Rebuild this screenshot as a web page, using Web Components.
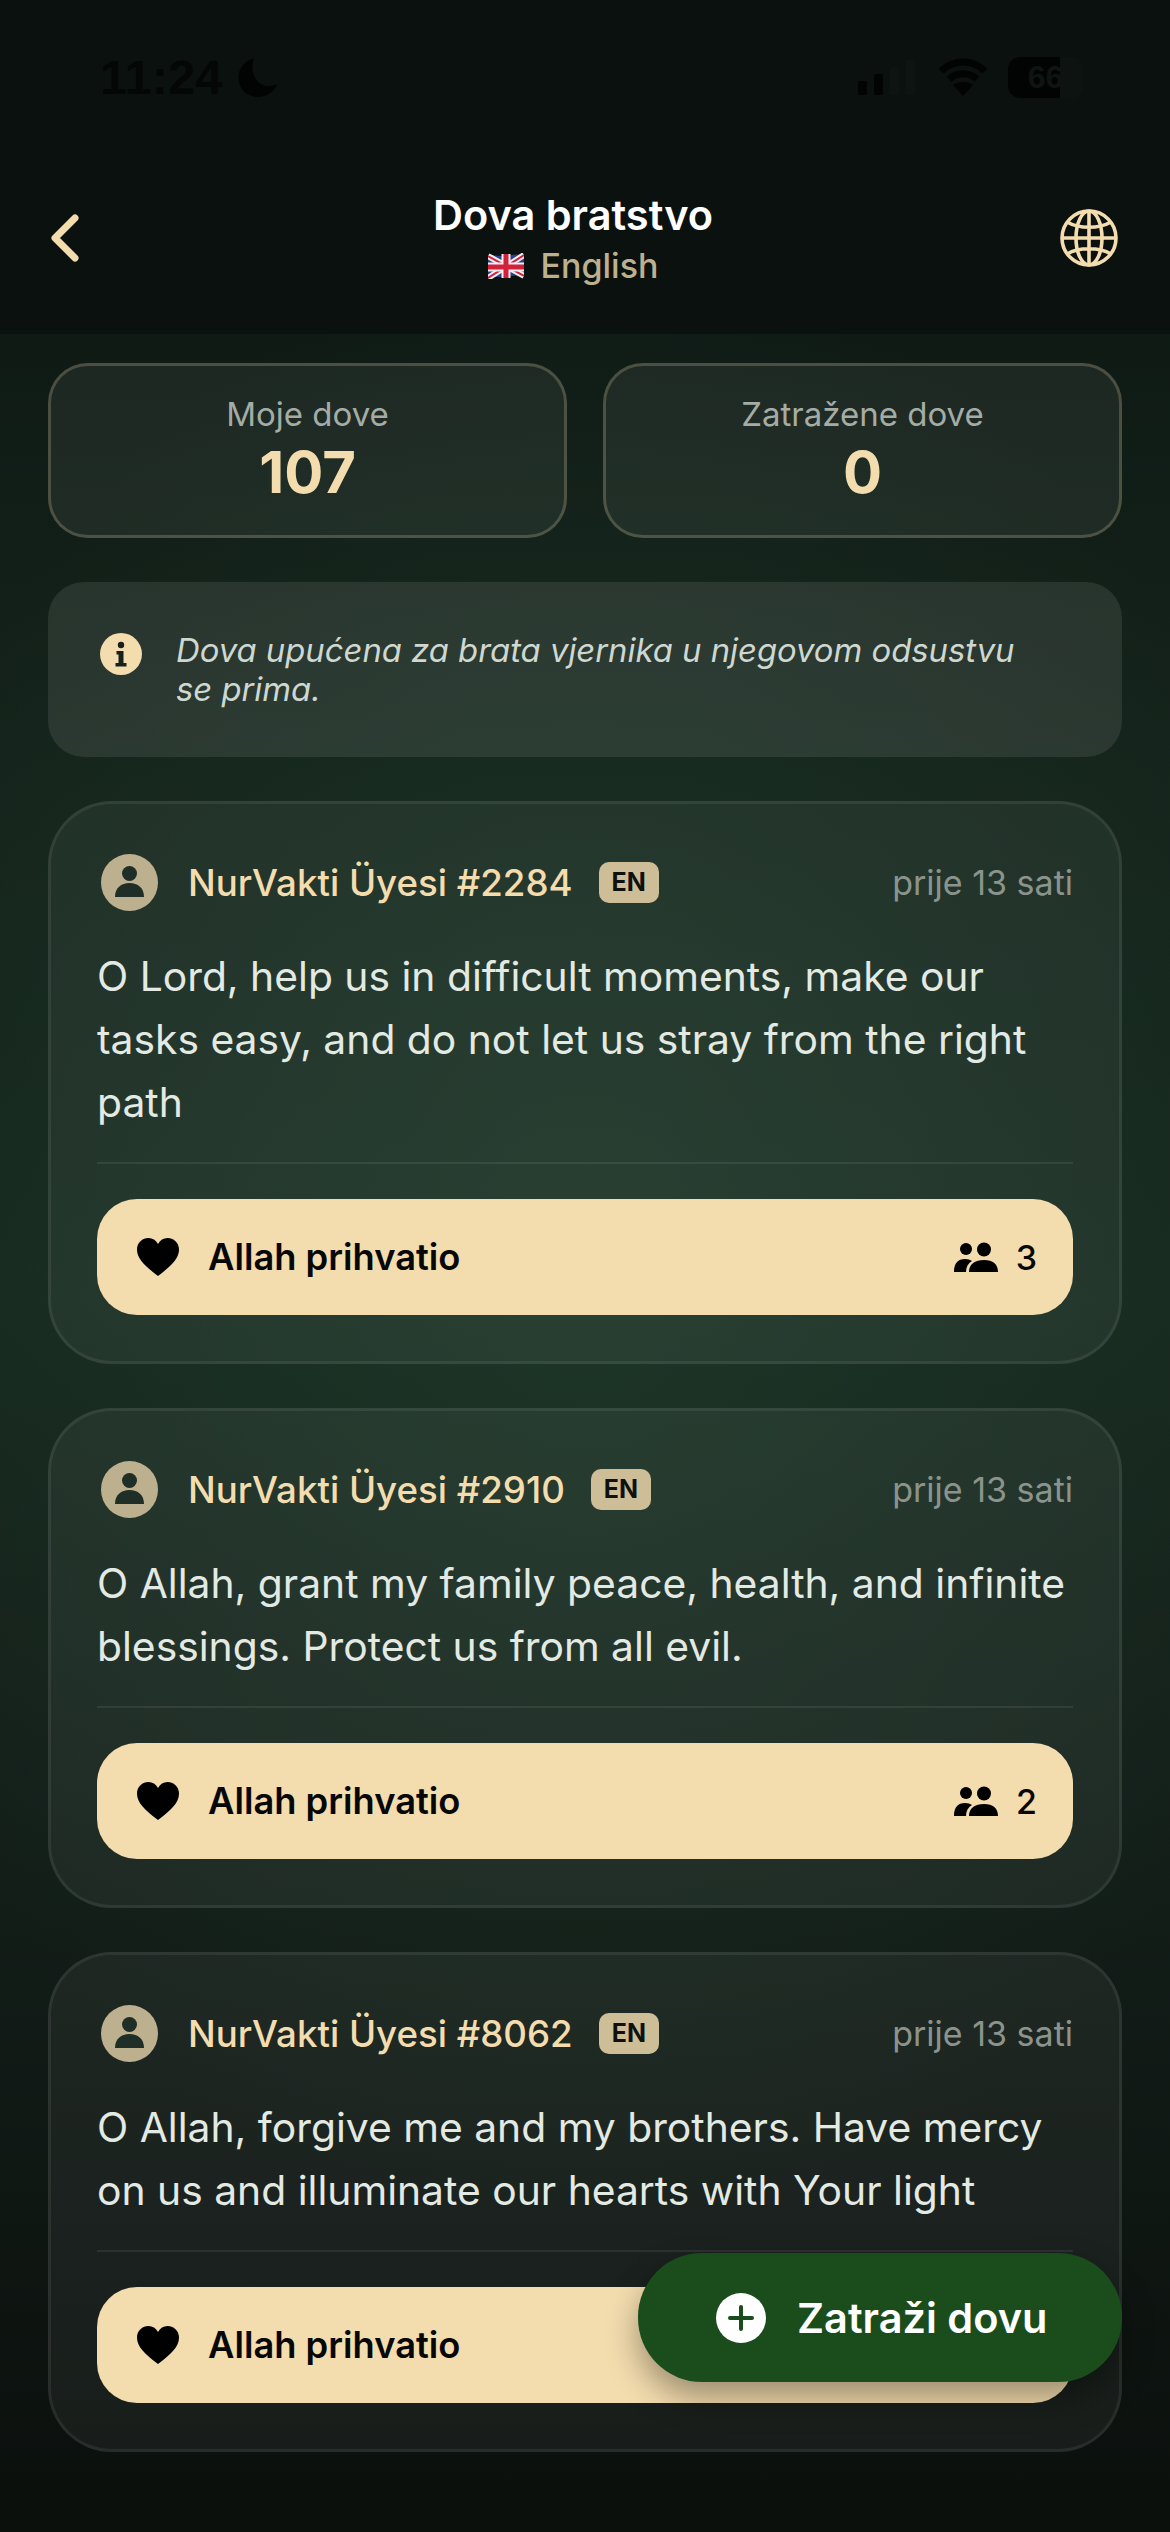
<!DOCTYPE html>
<html lang="bs">
<head>
<meta charset="utf-8">
<title>Dova bratstvo</title>
<style>
  html, body { margin: 0; height: 2532px; overflow: hidden; background: #0b100d; }
  body { font-family: Inter, "Liberation Sans", sans-serif; }
</style>
</head>
<body>
<dova-screen>
  <status-bar slot="top"></status-bar>
  <page-header slot="top" title="Dova bratstvo" lang-name="English"></page-header>
  <stat-row>
    <stat-card label="Moje dove" value="107"></stat-card>
    <stat-card label="Zatražene dove" value="0"></stat-card>
  </stat-row>
  <info-note>Dova upućena za brata vjernika u njegovom odsustvu se prima.</info-note>
  <dua-card name="NurVakti Üyesi #2284" time="prije 13 sati" count="3">O Lord, help us in difficult moments, make our tasks easy, and do not let us stray from the right path</dua-card>
  <dua-card name="NurVakti Üyesi #2910" time="prije 13 sati" count="2">O Allah, grant my family peace, health, and infinite blessings. Protect us from all evil.</dua-card>
  <dua-card name="NurVakti Üyesi #8062" time="prije 13 sati">O Allah, forgive me and my brothers. Have mercy on us and illuminate our hearts with Your light</dua-card>
  <request-button slot="over">Zatraži dovu</request-button>
</dova-screen>

<script>
class DovaScreen extends HTMLElement {
  connectedCallback() {
    this.attachShadow({ mode: "open" }).innerHTML = `
    <style>
    :host {
      display: block;
      position: relative;
      height: 2532px;
      overflow: hidden;
      background:
        radial-gradient(ellipse 760px 1000px at 50% 1250px, rgba(38,72,50,.42), rgba(38,72,50,0) 100%),
        linear-gradient(180deg, #0f1a15 334px, #15241c 800px, #17291f 1300px, #141f1a 1800px, #0f1713 2200px, #0b100d 2500px);
    }
    .main {
      display: flex;
      flex-direction: column;
      gap: 44px;
      padding: 29px 48px 0;
    }
    </style>
    <slot name="top"></slot>
    <div class="main"><slot></slot></div>
    <slot name="over"></slot>
    `;
  }
}

class StatusBar extends HTMLElement {
  connectedCallback() {
    this.attachShadow({ mode: "open" }).innerHTML = `
    <style>
    :host {
      display: flex;
      align-items: center;
      justify-content: space-between;
      box-sizing: border-box;
      height: 120px;
      padding: 34px 87px 0 100px;
      background: #0b110e;
      color: #040706;
      font: 600 49px "Liberation Sans", sans-serif;
    }
    .left, .right { display: flex; align-items: center; }
    .left { gap: 15px; }
    .right { gap: 20px; }
    .battery {
      display: flex;
      align-items: center;
      justify-content: center;
      width: 75px;
      height: 41px;
      border-radius: 12px;
      background: linear-gradient(90deg, #020403 70%, #0d1310 70%);
      color: #0e1411;
      font-size: 32px;
    }
    </style>
    <div class="left">
      <span>11:24</span>
      <svg width="40" height="41" viewBox="0 0 40 42"><path fill="#020403" d="M16 1C6 4 0 12 0 21c0 12 9 20 20 20 9 0 16-5 20-13-3 1-6 2-9 2C19 30 11 17 16 1z"/></svg>
    </div>
    <div class="right">
      <svg width="60" height="36" viewBox="0 0 60 36"><g fill="#020403"><rect x="0" y="22" width="9" height="14" rx="2"/><rect x="16" y="15" width="9" height="21" rx="2"/></g><g fill="#0e1411"><rect x="32" y="8" width="9" height="28" rx="2"/><rect x="48" y="1" width="9" height="35" rx="2"/></g></svg>
      <svg width="50" height="38" viewBox="0 0 50 38"><path fill="none" stroke="#020403" stroke-width="7" d="M3 13C16 1 34 1 47 13M11 21c8-7 20-7 28 0"/><path fill="#020403" d="M25 38 15 27c6-4 14-4 20 0z"/></svg>
      <div class="battery">66</div>
    </div>
    `;
  }
}

class PageHeader extends HTMLElement {
  connectedCallback() {
    this.attachShadow({ mode: "open" }).innerHTML = `
    <style>
    :host {
      display: grid;
      grid-template-columns: 110px 1fr 110px;
      align-items: center;
      box-sizing: border-box;
      height: 214px;
      padding: 22px 52px 0 50px;
      background: #0b110e;
    }
    .mid {
      display: flex;
      flex-direction: column;
      align-items: center;
      gap: 5px;
      transform: translateX(-11px);
    }
    .title { color: #fff; font-size: 41.500px; font-weight: 600; line-height: 50px; }
    .lang {
      display: flex;
      align-items: center;
      gap: 17px;
      color: #bdb08f;
      font-size: 34px;
      font-weight: 500;
      line-height: 42px;
    }
    .globe { justify-self: end; display: block; }
    .back { display: block; }
    </style>
    <svg class="back" width="30" height="48" viewBox="0 0 30 48"><path fill="none" stroke="#f3dcae" stroke-width="7" stroke-linecap="round" stroke-linejoin="round" d="M25 4 5 24l20 20"/></svg>
    <div class="mid">
      <div class="title">${this.getAttribute("title")}</div>
      <div class="lang">
        <svg width="36" height="26" viewBox="0 0 36 26">
          <path fill="#2a3f86" d="M0 3c6-2 12 1 18 0s12-2 18-1v21c-6-1-12 0-18 1S6 23 0 25z"/>
          <path stroke="#f1eef0" stroke-width="6" d="M0 3 36 23M36 2 0 25"/>
          <path stroke="#d3213c" stroke-width="2" d="M0 3 36 23M36 2 0 25"/>
          <path stroke="#f1eef0" stroke-width="9" d="M18 1v24M0 14h36"/>
          <path stroke="#d3213c" stroke-width="5" d="M18 1v24M0 14h36"/>
        </svg>
        <span>${this.getAttribute("lang-name")}</span>
      </div>
    </div>
    <svg class="globe" width="58" height="58" viewBox="0 0 58 58" fill="none" stroke="#f3dcae" stroke-width="3.6">
      <circle cx="29" cy="29" r="27"/>
      <ellipse cx="29" cy="29" rx="13" ry="27"/>
      <path d="M29 2v54M2 29h54M7 13c12 7 32 7 44 0M7 45c12-7 32-7 44 0"/>
    </svg>
    `;
  }
}

class StatRow extends HTMLElement {
  connectedCallback() {
    this.attachShadow({ mode: "open" }).innerHTML = `
    <style>
    :host { display: grid; grid-template-columns: 1fr 1fr; gap: 36px; }
    </style>
    <slot></slot>
    `;
  }
}

class StatCard extends HTMLElement {
  connectedCallback() {
    this.attachShadow({ mode: "open" }).innerHTML = `
    <style>
    :host {
      display: flex;
      flex-direction: column;
      align-items: center;
      box-sizing: border-box;
      height: 175px;
      padding-top: 27px;
      border: 3px solid rgba(243,220,174,.22);
      border-radius: 40px;
      background: rgba(255,255,255,.06);
    }
    .label { color: #a4ada5; font-size: 33px; line-height: 42px; }
    .value { margin-top: 3px; color: #f3dcae; font-size: 58px; font-weight: 700; line-height: 68px; }
    </style>
    <div class="label">${this.getAttribute("label")}</div>
    <div class="value">${this.getAttribute("value")}</div>
    `;
  }
}

class InfoNote extends HTMLElement {
  connectedCallback() {
    this.attachShadow({ mode: "open" }).innerHTML = `
    <style>
    :host {
      display: flex;
      align-items: center;
      gap: 34px;
      box-sizing: border-box;
      height: 175px;
      padding: 0 70px 0 52px;
      border-radius: 36px;
      background: rgba(255,255,255,.09);
    }
    svg { flex: none; align-self: flex-start; margin-top: 51px; }
    .text {
      color: #ced8d0;
      font-size: 32.800px;
      font-style: italic;
      line-height: 39px;
    }
    </style>
    <svg width="42" height="42" viewBox="0 0 42 42">
      <circle cx="21" cy="21" r="21" fill="#f3dcae"/>
      <circle cx="21" cy="12" r="3.2" fill="#16211b"/>
      <path fill="#16211b" d="M16.500 18h7v12h3v3.500h-11V30h3v-8.500h-2z"/>
    </svg>
    <div class="text"><slot></slot></div>
    `;
  }
}

class DuaCard extends HTMLElement {
  connectedCallback() {
    const count = this.getAttribute("count");
    // the third card's counter sits under the floating button, so it has none
    const counter = count ? `
      <svg class="people" width="44" height="30" viewBox="0 0 44 30">
        <circle cx="12" cy="7" r="6"/><circle cx="30" cy="7.500" r="7"/>
        <path d="M0 30c0-9 4-13 11-13 3 0 5 .7 7 2-4 2.500-6 6-6 11zM15 30c0-8 6-12 15-12s14 4 14 12z"/>
      </svg>
      <span class="count">${count}</span>` : "";
    this.attachShadow({ mode: "open" }).innerHTML = `
    <style>
    :host {
      display: block;
      box-sizing: border-box;
      padding: 49px 46px 46px;
      border: 3px solid rgba(255,255,255,.07);
      border-radius: 64px;
      background: rgba(255,255,255,.05);
    }
    .head { display: flex; align-items: center; height: 58px; }
    .avatar { flex: none; margin-left: 4px; margin-right: 30px; }
    .name { color: #f3dcae; font-size: 36.700px; font-weight: 500; }
    .badge {
      margin-left: 26px;
      padding: 0 13px;
      border-radius: 10px;
      background: #cdbe97;
      color: #0e110d;
      font-size: 25px;
      font-weight: 700;
      line-height: 41px;
    }
    .time { margin-left: auto; color: #8b948c; font-size: 34px; }
    .text {
      margin: 34px 0 0;
      padding-bottom: 28px;
      border-bottom: 2px solid rgba(255,255,255,.08);
      color: #e3eae3;
      font-size: 40.800px;
      line-height: 63px;
    }
    .accept {
      display: flex;
      align-items: center;
      box-sizing: border-box;
      height: 116px;
      margin-top: 35px;
      padding: 0 36px 0 40px;
      border-radius: 40px;
      background: #f3dcae;
      color: #060706;
      font-size: 36.300px;
      font-weight: 600;
    }
    .heart { margin-right: 29px; }
    .people { margin-left: auto; margin-right: 18px; }
    .count { font-weight: 500; font-size: 34px; }
    </style>
    <div class="head">
      <svg class="avatar" width="57" height="57" viewBox="0 0 57 57">
        <circle cx="28.500" cy="28.500" r="28.500" fill="#bdb08f"/>
        <circle cx="28.500" cy="19.500" r="7.500" fill="#1f2f27"/>
        <path fill="#1f2f27" d="M14 43c0-9 6-14 14.500-14S43 34 43 43z"/>
      </svg>
      <span class="name">${this.getAttribute("name")}</span>
      <span class="badge">EN</span>
      <span class="time">${this.getAttribute("time")}</span>
    </div>
    <p class="text"><slot></slot></p>
    <div class="accept">
      <svg class="heart" width="42" height="38" viewBox="0 0 42 38"><path d="M21 38C8 28 0 21 0 11.500 0 4.500 5.500 0 11.500 0 15.500 0 19 2 21 6c2-4 5.500-6 9.500-6C36.500 0 42 4.500 42 11.500 42 21 34 28 21 38z"/></svg>
      <span>Allah prihvatio</span>
      ${counter}
    </div>
    `;
  }
}

class RequestButton extends HTMLElement {
  connectedCallback() {
    this.attachShadow({ mode: "open" }).innerHTML = `
    <style>
    :host {
      position: absolute;
      left: 638px;
      top: 2253px;
      display: flex;
      align-items: center;
      gap: 31px;
      box-sizing: border-box;
      width: 484px;
      height: 129px;
      padding-left: 78px;
      border-radius: 64px;
      background: #1b4d1c;
      box-shadow: 0 16px 32px rgba(0,0,0,.35);
      color: #fff;
      font-size: 41.500px;
      font-weight: 600;
    }
    </style>
    <svg width="50" height="50" viewBox="0 0 50 50">
      <circle cx="25" cy="25" r="25" fill="#fff"/>
      <path stroke="#1b4d1c" stroke-width="4" stroke-linecap="round" d="M25 14v22M14 25h22"/>
    </svg>
    <span><slot></slot></span>
    `;
  }
}

customElements.define("dova-screen", DovaScreen);
customElements.define("status-bar", StatusBar);
customElements.define("page-header", PageHeader);
customElements.define("stat-row", StatRow);
customElements.define("stat-card", StatCard);
customElements.define("info-note", InfoNote);
customElements.define("dua-card", DuaCard);
customElements.define("request-button", RequestButton);
</script>
</body>
</html>
